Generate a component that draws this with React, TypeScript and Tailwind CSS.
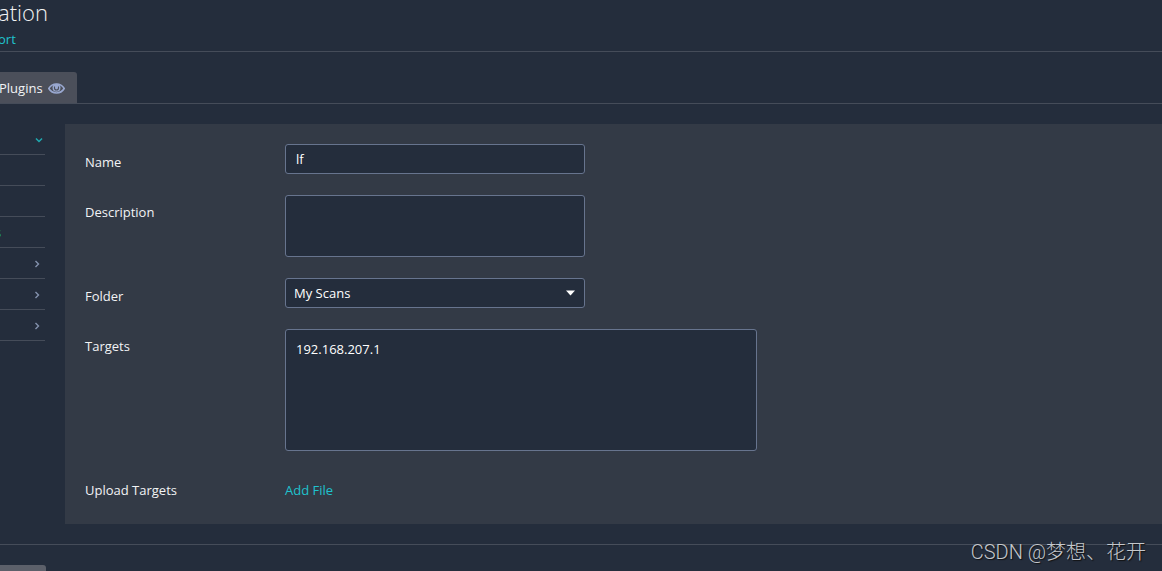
type NavItem = {
  id: string
  label?: string
  state: 'open' | 'closed' | 'child' | 'active'
}

const NAV_ITEMS: NavItem[] = [
  { id: 'basic', state: 'open' },
  { id: 'general', state: 'child' },
  { id: 'schedule', state: 'child' },
  { id: 'notifications', label: 's', state: 'active' },
  { id: 'discovery', state: 'closed' },
  { id: 'assessment', state: 'closed' },
  { id: 'report', state: 'closed' },
]

const LABEL = 'w-[200px] shrink-0 pt-2 leading-5'
const AREA_LABEL = 'w-[200px] shrink-0 pt-2 leading-[18px]'
const FIELD =
  'block rounded-[3px] border border-[#67748e] bg-[#242d3c] text-white outline-none focus:border-[#1fc3cf]'

function Chevron({ open }: { open: boolean }) {
  return open ? (
    <svg className="w-2 h-2 text-[#1fa9b0]" viewBox="0 0 8 8" fill="none" stroke="currentColor" strokeWidth="1.5">
      <path d="M1 2.5 4 5.5 7 2.5" />
    </svg>
  ) : (
    <svg className="w-2 h-2 mr-0.5 text-[#8492ae]" viewBox="0 0 8 8" fill="none" stroke="currentColor" strokeWidth="1.4">
      <path d="M2.5 1 5.5 4 2.5 7" />
    </svg>
  )
}

function EyeIcon() {
  return (
    <svg className="w-[17px] h-[11px]" viewBox="0 0 17 11" fill="none" stroke="#99a8d0">
      <path d="M.8 5.5C2.6 2.5 5.300 1 8.500 1s5.900 1.500 7.700 4.500C14.400 8.500 11.700 10 8.500 10S2.600 8.500.8 5.500Z" strokeWidth="1.600" />
      <circle cx="8.500" cy="4.800" r="4" fill="#99a8d0" stroke="none" />
      <path d="M6.500 3.500V5a2 2 0 0 0 4 0V3.500" stroke="#4b4f5a" strokeWidth="1.100" />
    </svg>
  )
}

export default function App() {
  return (
    <div className="relative h-screen overflow-hidden flex flex-col bg-[#242d3c] font-['Open_Sans',sans-serif] text-[13px] text-[#f2f3f5]">
      {/* Header */}
      <header className="h-[52px] shrink-0 -ml-0.5 border-b border-[#454c59]">
        <h1 className="text-[22px] leading-6 font-light">ation</h1>
        <a href="#report" className="block leading-5 pt-[5px] text-[#1fc3cf]">
          ort
        </a>
      </header>

      {/* Tabs */}
      <nav className="mt-5 flex shrink-0 border-b border-[#454c59]">
        <button className="h-[31px] pt-0.5 pr-3 -ml-px flex items-center gap-[5px] rounded-tr-[3px] bg-[#4b4f5a]">
          Plugins
          <EyeIcon />
        </button>
      </nav>

      <main className="flex items-start gap-5 shrink-0 py-5">
        {/* Settings menu */}
        <aside className="w-[45px] shrink-0">
          <ul>
            {NAV_ITEMS.map((item) => (
              <li key={item.id} className="h-[31px] border-b border-[#454c59]">
                <a
                  href={`#${item.id}`}
                  aria-label={item.id}
                  className="h-full flex items-center pt-0.5 pr-0.5 -ml-[5px] text-[#1fb898]"
                >
                  {item.label}
                  <span className="ml-auto">
                    {(item.state === 'open' || item.state === 'closed') && (
                      <Chevron open={item.state === 'open'} />
                    )}
                  </span>
                </a>
              </li>
            ))}
          </ul>
        </aside>

        <form className="flex-1 min-w-0 flex flex-col gap-[21px] bg-[#333a46] p-5">
          <div className="flex">
            <label htmlFor="name" className={LABEL}>Name</label>
            <input id="name" type="text" defaultValue="lf" className={`${FIELD} w-[300px] h-[30px] px-2.5`} />
          </div>

          <div className="flex">
            <label htmlFor="description" className={AREA_LABEL}>Description</label>
            <textarea id="description" className={`${FIELD} w-[300px] h-[62px] p-2.5 leading-[18px] resize-none`} />
          </div>

          <div className="flex">
            <label htmlFor="folder" className={LABEL}>Folder</label>
            <div className="relative w-[300px]">
              <select id="folder" className={`${FIELD} w-full h-[30px] pt-px px-2 appearance-none`}>
                <option>My Scans</option>
              </select>
              <svg
                className="absolute right-2.5 top-3 w-[9px] h-[6px] pointer-events-none"
                viewBox="0 0 9 6"
                fill="#fff"
              >
                <path d="M0 .5h9L4.5 5.5Z" />
              </svg>
            </div>
          </div>

          <div className="flex">
            <label htmlFor="targets" className={AREA_LABEL}>Targets</label>
            <textarea
              id="targets"
              defaultValue="192.168.207.1"
              className={`${FIELD} w-[472px] h-[122px] p-2.5 leading-[18px] resize-none`}
            />
          </div>

          <div className="flex h-8">
            <span className={LABEL}>Upload Targets</span>
            <a href="#upload" className="pt-2 leading-5 text-[#1fc3cf]">Add File</a>
          </div>
        </form>
      </main>

      {/* Actions */}
      <footer className="shrink-0 border-t border-[#454c59] pt-5">
        <button aria-label="Save" className="block w-[46px] h-[30px] rounded-tr-[3px] bg-[#5c606a]" />
      </footer>

      <p className="absolute right-4 bottom-[5px] text-[20px] leading-7 font-light text-[#c4c7cc] font-['Roboto','Noto_Sans_CJK_SC',sans-serif] [text-shadow:1px_1px_1px_#111] pointer-events-none">
        CSDN @梦想、花开
      </p>
    </div>
  )
}
